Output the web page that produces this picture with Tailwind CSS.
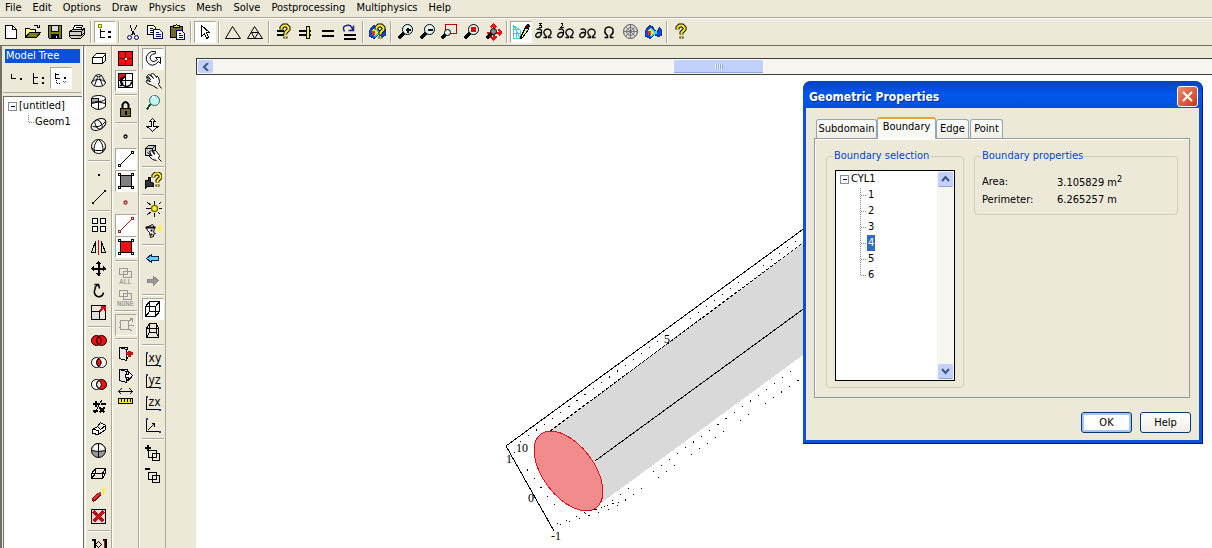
<!DOCTYPE html>
<html lang="en">
<head>
  <meta charset="UTF-8" />
  <meta name="viewport" content="width=device-width, initial-scale=1.0" />
  <title>Geometric Properties</title>
  <script src="https://cdn.jsdelivr.net/npm/@tailwindcss/browser@4"></script>
</head>
<body class="h-screen overflow-hidden flex flex-col bg-[#ece9d8] text-black text-[11px] leading-4 font-['DejaVu_Sans_Condensed','DejaVu_Sans',sans-serif]">

  <!-- menu -->
  <nav class="flex h-[17px] items-center gap-[11px] pl-[5px] pb-[2px]">
    <button>File</button>
    <button>Edit</button>
    <button>Options</button>
    <button>Draw</button>
    <button>Physics</button>
    <button>Mesh</button>
    <button>Solve</button>
    <button>Postprocessing</button>
    <button>Multiphysics</button>
    <button>Help</button>
  </nav>

  <!-- main toolbar -->
  <div id="main-bar" role="toolbar" aria-label="Main" class="flex h-[29px] items-center border-t border-[#aca899] shadow-[inset_0_1px_0_#fff] border-b border-b-[#716f64]"></div>

  <div class="flex flex-1 min-h-0">
    <!-- model tree -->
    <aside class="w-[83px] shrink-0 flex flex-col border-l-2 border-[#716f64] border-r border-r-white pt-[3px] pl-px">
      <h2 class="bg-[#0a50d8] text-white h-[14px] leading-[14px] ml-[2px] mr-[2px] pl-px">Model Tree</h2>
      <div id="tree-bar" role="toolbar" aria-label="Tree detail" class="flex h-[29px] items-center pl-[3px]"></div>
      <hr class="border-[#aca899] mr-px" />
      <div class="flex-1 bg-white border-t border-l border-[#716f64] mt-[3px] pl-1 pt-px">
        <div class="flex items-center gap-[2px] h-4">
          <svg width="9" height="9" viewBox="-.5 -.5 9 9" fill="#fff" stroke="#7b8fa8" shape-rendering="crispEdges"><path d="M0 0H8V8H0z"/><path d="M2 4H6" stroke="#000"/></svg>
          <span>[untitled]</span>
        </div>
        <div class="flex items-center h-4 pl-5 gap-px">
          <svg width="6" height="16" viewBox="-.5 -.5 6 16" fill="none" stroke="#888" stroke-dasharray="1 1" shape-rendering="crispEdges"><path d="M0 0V8H6"/></svg>
          <span>Geom1</span>
        </div>
      </div>
    </aside>

    <!-- side toolbars -->
    <div class="flex shrink-0 pl-px border-l border-[#716f64]">
      <div id="draw-bar" role="toolbar" aria-label="Draw" class="flex flex-col items-center w-[27px] border-l border-l-white border-r border-r-[#aca899] pt-[2px]"></div>
      <div id="select-bar" role="toolbar" aria-label="Selection" class="flex flex-col items-center w-[27px] border-l border-l-white border-r border-r-[#aca899] pt-[2px]"></div>
      <div id="camera-bar" role="toolbar" aria-label="Camera" class="flex flex-col items-center w-[27px] border-l border-l-white border-r border-r-[#aca899] pt-[2px]"></div>
    </div>

    <!-- drawing area -->
    <main class="flex-1 min-w-0 flex flex-col pl-[30px] pt-3">
      <div class="h-[17px] shrink-0 flex border border-r-0 border-[#3c3c3c] bg-[#f6f5f0]">
        <button aria-label="Scroll left" class="w-[15px] m-px rounded-xs bg-[#c1d1fb] grid place-items-center"><svg width="8" height="8" viewBox="0 0 8 8" fill="none" stroke="#3c5584" stroke-width="2"><path d="M6 0L2 4L6 8"/></svg></button>
        <div class="flex-1 flex">
          <div class="w-[46%]"></div>
          <button aria-label="Scroll position" class="w-[91px] h-[14px] rounded-xs border border-white border-b-[#8ba4dc] bg-[#c1d1fb] grid place-items-center"><svg width="8" height="6" viewBox="-.5 -.5 8 6" stroke="#eef3ff" shape-rendering="crispEdges"><path d="M0 0V6M2 0V6M4 0V6M6 0V6"/><path d="M1 0V6M3 0V6M5 0V6M7 0V6" stroke="#90a8e0"/></svg></button>
        </div>
      </div>
      <div class="flex-1 min-h-0 bg-white overflow-hidden">
        <svg width="1016" height="473" viewBox="196 75 1016 473" fill="none" stroke="#000" shape-rendering="crispEdges" aria-label="Cylinder plot">
          <path d="M550 431L803 243L850 208V320L803 355L597 506z" fill="#d9d9d9" stroke="none"/>
          <path d="M550 431L850 208" stroke-dasharray="3 2"/>
          <path d="M595 461L850 275"/>
          <ellipse cx="568.5" cy="471" rx="46" ry="25.5" transform="rotate(53 568.5 471)" fill="#f28b8b" stroke="#e01020"/>
          <path d="M554 531L506 446L850 195"/>
          <path d="M520 442L850 202" stroke-dasharray="1 9"/>
          <path d="M514 452L559 511" stroke-dasharray="1 10"/>
          <path d="M557 524L605 506L803 363" stroke-dasharray="1 9"/>
          <path d="M560 525L614 508L803 377" stroke-dasharray="1 9"/>
          <path d="M584 513L622 501" stroke-dasharray="1 5"/>
          <g fill="#000" stroke="none" class="text-[12px] font-['Liberation_Serif',serif]">
            <text x="516" y="452">10</text>
            <text x="506" y="463">1</text>
            <text x="528" y="502">0</text>
            <text x="551" y="540">-1</text>
            <text x="664" y="343">5</text>
          </g>
        </svg>
      </div>
    </main>
  </div>

  <!-- dialog -->
  <section role="dialog" aria-labelledby="dlg-title" class="absolute left-[803px] top-[81px] w-[400px] rounded-t-lg bg-[#0a50d8] border-r border-b border-[#00138c] px-[3px] pb-[3px]">
    <header class="flex items-center justify-between h-[27px] -mx-[3px] pl-[6px] pr-1 rounded-t-lg bg-linear-to-b from-[#0a3fc4] via-[#0058ee] to-[#0550dd]">
      <h1 id="dlg-title" class="text-white font-bold text-[12px] pt-[5px] [text-shadow:1px_1px_0_#0a2a80]">Geometric Properties</h1>
      <button aria-label="Close" class="mt-1 size-[21px] rounded-[3px] border border-white bg-linear-to-br from-[#f08868] to-[#c8351a] grid place-items-center"><svg width="13" height="13" viewBox="0 0 13 13" stroke="#fff" stroke-width="2"><path d="M2 2L11 11M11 2L2 11"/></svg></button>
    </header>
    <div class="bg-[#ece9d8] px-2 pt-[9px] pb-[7px]">
      <div role="tablist" class="flex items-end h-[21px] pl-[2px]">
        <button role="tab" class="h-[19px] w-[61px] border border-b-0 border-[#91a7b4] rounded-t-[3px] bg-linear-to-b from-white to-[#f0efe6]">Subdomain</button>
        <button role="tab" aria-selected="true" class="h-[22px] w-[59px] -mb-px pb-1 border border-b-0 border-[#91a7b4] border-t-2 border-t-[#f0a030] rounded-t-[3px] bg-[#fbfaf7] relative">Boundary</button>
        <button role="tab" class="h-[19px] w-[33px] border border-b-0 border-[#91a7b4] rounded-t-[3px] bg-linear-to-b from-white to-[#f0efe6]">Edge</button>
        <button role="tab" class="h-[19px] w-[33px] ml-px border border-b-0 border-[#91a7b4] rounded-t-[3px] bg-linear-to-b from-white to-[#f0efe6]">Point</button>
      </div>
      <div class="flex items-start gap-[10px] h-[260px] border border-[#919b9c] mr-px px-[11px] pt-[9px] shadow-[inset_1px_1px_0_#fff]">
        <fieldset class="w-[138px] h-[240px] rounded-[4px] border border-[#d0cdb8] px-2">
          <legend class="text-[#0046d5] px-px ml-[-2px]">Boundary selection</legend>
          <div class="flex h-[211px] border border-black bg-white mt-[6px]">
            <ul role="tree" class="flex-1 pl-1">
              <li role="treeitem">
                <div class="flex items-center gap-[2px] h-4">
                  <svg width="9" height="9" viewBox="-.5 -.5 9 9" fill="#fff" stroke="#7b8fa8" shape-rendering="crispEdges"><path d="M0 0H8V8H0z"/><path d="M2 4H6" stroke="#000"/></svg>
                  <span>CYL1</span>
                </div>
                <ul id="boundaries" role="group" class="pl-5"></ul>
              </li>
            </ul>
            <div class="w-[17px] flex flex-col justify-between bg-[#f6f5f0] p-px">
              <button aria-label="Scroll up" class="h-[15px] rounded-xs bg-[#c1d1fb] border-b border-[#8ba4dc] grid place-items-center"><svg width="9" height="8" viewBox="0 0 9 8" fill="none" stroke="#3c5584" stroke-width="2"><path d="M1 6L4.500 2L8 6"/></svg></button>
              <button aria-label="Scroll down" class="h-[15px] rounded-xs bg-[#c1d1fb] border-b border-[#8ba4dc] grid place-items-center"><svg width="9" height="8" viewBox="0 0 9 8" fill="none" stroke="#3c5584" stroke-width="2"><path d="M1 2L4.500 6L8 2"/></svg></button>
            </div>
          </div>
        </fieldset>
        <fieldset class="flex-1 h-[67px] rounded-[4px] border border-[#d0cdb8] px-[7px]">
          <legend class="text-[#0046d5] px-px ml-[-1px]">Boundary properties</legend>
          <dl class="grid grid-cols-[75px_1fr] leading-[18px] pt-[9px]">
            <dt>Area:</dt><dd class="pt-px h-[18px]">3.105829 m<sup class="text-[9px]">2</sup></dd>
            <dt>Perimeter:</dt><dd>6.265257 m</dd>
          </dl>
        </fieldset>
      </div>
      <div class="flex justify-end gap-2 pt-[14px]">
        <button class="w-[51px] h-[21px] rounded-[3px] border border-[#003c74] bg-white shadow-[inset_0_0_0_2px_#a6c4f5]">OK</button>
        <button class="w-[51px] h-[21px] rounded-[3px] border border-[#003c74] bg-linear-to-b from-white to-[#eeede5]">Help</button>
      </div>
    </div>
  </section>

  <script>
    // 18px icons, whole numbers are pixel centres
    const smooth = (s) => `<g shape-rendering="auto">${s}</g>`;
    const lens = (x) => `<path d="M7 10L2 15" stroke-width="3"/>` + smooth('<circle cx="11" cy="6" r="5" fill="#dff6f4"/>') + x;
    const omega = smooth('<path d="M9 14H12V13Q8 10 10 7Q13 4 16 7Q18 10 14 13V14H17" stroke-width="1.300"/>');
    const partial = smooth('<path d="M2 6Q8 4 7 10Q6 14 3 14Q0 13 2 10Q5 8 7 10" stroke-width="1.300"/>');
    const axes = (t) => `<path d="M2 1V15H16"/><path d="M1 2H3M15 14V16" stroke="#2040a0" stroke-width="2"/>${t}`;
    const label = (t) => `<text x="4" y="11" font-size="12" fill="#000" stroke="none">${t}</text>`;
    const venn = (a, b, c) => smooth(`<circle cx="6" cy="8" r="5" fill="${a}"/><circle cx="11" cy="8" r="5" fill="${b}"/><path d="M8.500 4Q4 8 8.500 12Q13 8 8.500 4" fill="${c}"/>`);
    const node = (f) => `<path d="M3 3H14V14H3z" fill="${f}"/><path d="M1 1H3V3H1zM14 1H16V3H14zM1 14H3V16H1zM14 14H16V16H14z" fill="#fff"/>`;
    const seg = (c) => `<path d="M3 14L14 3" stroke="${c}"/><path d="M1 14H3V16H1zM14 1H16V3H14z" fill="#fff" stroke="${c}"/>`;
    const dot = (c) => smooth(`<circle cx="8" cy="8" r="1.500" fill="#fff" stroke="${c}" stroke-width="1.300"/>`);
    const mark = (x, y) => `M${x} ${y + 4}V${y + 2}L${x + 2} ${y}H${x + 5}L${x + 7} ${y + 2}V${y + 4}L${x + 4} ${y + 7}V${y + 9}M${x + 4} ${y + 11}V${y + 13}`;
    const qmark = (x, y) => smooth(`<path d="${mark(x, y)}" stroke-width="4"/><path d="${mark(x, y)}" stroke="#ffee20" stroke-width="2"/>`);
    const blob = '<path d="M1 7L5 2L9 4L10 7L13 8L15 4L17 6V12L14 13L10 11L6 15L1 13z" fill="#1848d0" stroke="#1038a0"/><path d="M3 7L6 4L9 7L12 8V10L7 13L3 11z" fill="#30d8e8" stroke="none"/><path d="M3 7L6 5L9 9L6 12L3 11z" fill="#ffe830" stroke="none"/><path d="M3 7L6 8V11L3 11z" fill="#e83010" stroke="none"/>';
    const door = '<path d="M2 3L9 5V16L2 14z" fill="#e8e8e8"/><path d="M2 3H10V5M10 12V14H9"/>';
    const boxes = '<path d="M2 2H10V8H2zM6 5H14V11H6z" stroke="#999"/>';
    const small = (t) => `<text x="8" y="17" text-anchor="middle" font-size="7" font-family="DejaVu Sans Mono" fill="#888" stroke="none">${t}</text>`;

    const icons = {
      New: '<path d="M3 2H10L14 6V15H3z" fill="#fff"/><path d="M10 2V6H14"/>',
      Open: '<path d="M1 14V5H5L6 6H11V9" fill="#ffff80"/><path d="M1 14L5 9H16L12 14z" fill="#808000"/><path d="M9 3Q12 0 14 4M12 4H15V1"/>',
      Save: '<path d="M2 2H15V15H3L2 14z" fill="#808000"/><path d="M5 2H12V8H5z" fill="#ddd"/><path d="M5 11H12V15H5z" fill="#000"/><path d="M10 12V14" stroke="#fff"/>',
      Print: '<path d="M4 7L6 2H14L12 7" fill="#fff"/><path d="M7 4H12M6 6H11"/><path d="M1 8L4 6H13L16 5V11L12 15H3L1 13z" fill="#d0d0c8"/><path d="M1 8H13L16 5M1 12H13V8M13 12L16 9"/><path d="M9 13H12" stroke="#d0c000"/>',
      'Model tree': '<path d="M2 1H5V4H2z" fill="#ffff30" stroke="#908800"/><path d="M4 5V14H8M4 8H8" stroke-width="1"/><path d="M12 8H14V9H12zM12 13H14V14H12z" fill="#000"/>',
      Cut: '<path d="M6 2L7 7L11 12M12 2L10 7L7 12"/>' + smooth('<circle cx="5" cy="14" r="2" stroke="#0000a0"/><circle cx="12" cy="14" r="2" stroke="#0000a0"/>'),
      Copy: '<path d="M1 2H7L9 4V11H1z" fill="#fff"/><path d="M3 5H6M3 7H7M3 9H7"/><path d="M7 6H13L16 9V15H7z" fill="#fff" stroke="#000080"/><path d="M9 9H12M9 11H14M9 13H14" stroke="#000080"/>',
      Paste: '<path d="M2 3H14V14H2z" fill="#706830"/><path d="M5 4V2H7L8 1L9 2H11V4z" fill="#e8e060"/><path d="M8 7H13L16 10V16H8z" fill="#fff" stroke="#000080"/><path d="M10 10H12M10 12H14M10 14H14" stroke="#000080"/>',
      Select: '<path d="M5 2V13L8 10L10 15L12 14L10 9H13z" fill="#fff"/>',
      'Initialize mesh': smooth('<path d="M8 3L16 15H1z"/>'),
      'Refine mesh': smooth('<path d="M8 3L16 15H1zM5 9H12L8 15z"/>'),
      'Solver parameters': '<path d="M2 7H9M2 11H9" stroke-width="2"/>' + qmark(7, 2),
      'Solver manager': '<path d="M2 7H14M2 11H14" stroke-width="2"/><path d="M11 2V15" stroke-width="4"/><path d="M11 3V14" stroke="#ffee20" stroke-width="2"/>',
      Solve: '<path d="M3 7H15M3 12H15" stroke-width="2"/>',
      Restart: '<path d="M3 11H15M3 15H15" stroke-width="2"/>' + smooth('<path d="M4 8Q1 3 6 2Q12 1 12 7M8 7H13V2" stroke="#202080" stroke-width="1.500"/>'),
      'Plot parameters': blob + qmark(8, 2),
      'Zoom in': lens('<path d="M9 6H14M11 4V9" stroke-width="2"/>'),
      'Zoom out': lens('<path d="M9 6H14" stroke-width="2"/>'),
      'Zoom window': '<path d="M5 1H16V10H5z" stroke="#c00000"/><path d="M5 11L1 15" stroke-width="3"/>' + smooth('<circle cx="7" cy="9" r="3" fill="#dff6f4"/>'),
      'Zoom selection': lens('<path d="M9 4H13V8H9z" fill="#e00000" stroke="#e00000"/>'),
      'Zoom extents': '<path d="M9 1V16M2 9H17" stroke="#e81010" stroke-width="2"/><path d="M6 4L9 1L12 4M6 13L9 16L12 13M14 6L17 9L14 12" stroke="#e81010" stroke-width="2"/><path d="M7 10L2 15" stroke-width="3"/>' + smooth('<circle cx="9" cy="8" r="3" fill="#888"/>'),
      'Draw mode': '<path d="M1 2L8 15V7zM1 2V15H8M1 6H5M1 10H7M4 15V7" stroke="#40c8d8"/><path d="M8 14L13 4L16 6L10 14L8 15z" fill="#ffff50"/><path d="M13 3L16 5L17 2L15 1z" fill="#701010"/>',
      'Point mode': partial + omega + '<path d="M4 0H7L5 2H7V4H4"/>',
      'Edge mode': partial + omega + '<path d="M4 0H6V2L4 4H7"/>',
      'Boundary mode': partial + omega,
      'Subdomain mode': smooth('<path d="M4 14H7V12Q3 9 5 5Q8 2 12 5Q14 9 10 12V14H13" stroke-width="1.500"/>'),
      'Mesh mode': smooth('<g stroke="#555"><circle cx="8" cy="8" r="7" fill="#ddd"/><path d="M8 1V15M1 8H15M3 3L13 13M13 3L3 13" stroke="#777"/><circle cx="8" cy="8" r="4" stroke="#777"/></g>'),
      'Postprocessing mode': blob,
      Help: qmark(5, 2),

      'One level': '<path d="M3 4V9H7" stroke-width="1"/><path d="M12 9H13V10H12z" fill="#000"/>',
      'Two levels': '<path d="M3 3V14H7M3 8H7"/><path d="M12 8H13V9H12zM12 13H13V14H12z" fill="#000"/>',
      'All levels': '<path d="M3 3V9H7M3 5H6"/><path d="M12 8H13V9H12z" fill="#000"/><path d="M4 10V14H8" stroke-dasharray="1 1"/><path d="M11 12L13 14M13 12L11 14" stroke="#666"/>',

      Block: '<path d="M2 7L6 3H15V10L12 13H2z" fill="#fff"/><path d="M2 7H12L15 4M12 7V13"/>',
      Cone: smooth('<path d="M5 3L1 10Q2 14 8 14Q14 14 15 10L11 3Q8 1 5 3" fill="#fff"/><path d="M5 3Q8 6 11 3M1 10Q3 7 8 7Q13 7 15 10M7 5L4 13M9 5L12 13"/>'),
      Cylinder: smooth('<path d="M1 4V12Q8 18 15 12V4" fill="#fff"/><ellipse cx="8" cy="4" rx="7" ry="3" fill="#fff"/><path d="M8 4V15M1 9Q8 6 15 9"/><path d="M1 4V8L8 7V4z" fill="#aaa"/>'),
      Ellipsoid: smooth('<ellipse cx="8" cy="8" rx="8" ry="5" transform="rotate(-30 8 8)" fill="#fff"/><ellipse cx="8" cy="8" rx="3" ry="5" transform="rotate(-30 8 8)"/><path d="M2 10Q9 12 15 5"/>'),
      Sphere: smooth('<circle cx="8" cy="8" r="7" fill="#fff"/><path d="M8 1Q2 6 4 14M8 1Q14 6 12 14M1 9Q3 12 5 12H11Q14 12 15 9"/>'),
      Point: '<path d="M8 8H9V9H8z" fill="#000"/>',
      Line: '<path d="M3 14L14 3"/><path d="M2 14H3V15H2zM14 2H15V3H14z" fill="#000"/>',
      Array: '<path d="M2 2H7V7H2zM10 2H15V7H10zM2 10H7V15H2zM10 10H15V15H10z" fill="#fff"/>',
      Mirror: '<path d="M1 14L5 3V14zM11 14V3L15 14z"/><path d="M8 1V16" stroke="#d01010"/>',
      Move: '<path d="M8 2V15M2 8H15" stroke-width="2"/><path d="M6 3L8 1L10 3zM6 13L8 15L10 13zM3 6L1 8L3 10zM13 6L15 8L13 10z" fill="#000"/>',
      Rotate: smooth('<path d="M5 5Q2 12 7 14Q12 15 13 10M4 5L8 2M4 2L8 2L9 6" stroke-width="1.500"/>'),
      Scale: '<path d="M1 1H15V15H1z"/><path d="M1 7H9V15H1z" fill="#ddd"/><path d="M9 7L14 2M10 2H14V6" stroke="#d01010" stroke-width="2"/>',
      Union: venn('#f01010', '#f01010', '#f01010'),
      Intersection: venn('#fff', '#fff', '#f01010'),
      Difference: venn('#fff', '#f01010', '#fff'),
      'Create composite': '<path d="M2 5H8M5 2V8M10 5H15M2 12H7M9 9L14 14M14 9L9 14" stroke-width="2"/><path d="M11 2L4 15"/>',
      Extrude: '<path d="M2 9L7 6L10 2L15 5V9L8 14L2 13zM7 6L10 9L15 5M2 9L8 10V14" fill="#fff"/>',
      Revolve: smooth('<circle cx="8" cy="8" r="7" fill="#999"/><path d="M1 8A7 7 0 0 1 15 8L8 9z" fill="#fff"/><path d="M8 1V15"/>'),
      Embed: '<path d="M1 9L5 4H15L12 9zM1 9V14H12V9M12 14L15 9V4M5 4V9L1 14M5 9H15"/>',
      Edit3d: '<path d="M2 14L10 7" stroke="#801010" stroke-width="4"/><path d="M3 13L10 6" stroke="#e03030" stroke-width="2"/><path d="M11 3L15 7M15 2L11 6M13 1V8" stroke="#ffee30"/>',
      Delete: '<path d="M1 1H15V15H1z" fill="#ddd"/><path d="M3 3L13 13M13 3L3 13" stroke="#c01010" stroke-width="3"/>',
      Align: '<path d="M1 3H4V13H1M15 2V14M12 3H15M12 13H15" stroke-width="2"/><path d="M5 8L8 5L11 8L8 11z"/><path d="M14 3V13" stroke="#c01010"/>',

      'Select domains': '<path d="M1 1H15V15H1z" fill="#f01010"/><path d="M8 1V15M1 8H15" stroke="#700"/><path d="M7 8H9M8 7V9" stroke="#fff" stroke-width="2"/>',
      'Select adjacent': '<path d="M1 1H15V15H1z" fill="#fff"/><path d="M1 1H8V4L4 8H1z" fill="#f01010"/><path d="M8 1V15M1 8H15"/>' + smooth('<path d="M8 4A5 5 0 1 0 14 9M4 5Q2 9 5 13M5 13H2M5 13V10" stroke-width="1.500"/>'),
      Lock: smooth('<path d="M5 8V4Q8 -1 11 4V8" stroke-width="2"/>') + '<path d="M3 8H13V16H3z" fill="#706830"/><path d="M8 10V14" stroke-width="2"/>',
      'Show points': dot('#000'),
      'Show edges': seg('#000'),
      'Show faces': node('#808080'),
      'Red points': dot('#a02020'),
      'Red edges': seg('#a02020'),
      'Red faces': node('#f01010'),
      'Select all': boxes + small('ALL'),
      'Select none': boxes + small('NONE'),
      'Object properties': '<path d="M3 4H11V13H3zM1 6H3M1 11H3M11 5L15 2M12 2H15V5M11 12L15 15M11 9H16" stroke="#999"/>',
      'Delete interior': door + '<path d="M8 9H15M12 6V12" stroke="#c01818" stroke-width="3"/>',
      Export: door + '<path d="M8 8H11V5L15 9L11 14V11H8z" fill="#fff"/>',
      Measure: '<path d="M1 3H15M4 0L1 3L4 6M12 0L15 3L12 6"/><path d="M1 10H15V15H1z" fill="#ffee20"/><path d="M4 10V13M7 10V13M10 10V13M13 10V13"/>',

      Orbit: smooth('<path d="M7 1H11V3Q4 4 6 9Q8 13 13 9L11 7H16V13L14 11Q8 18 3 12Q-1 5 7 1z" fill="#fff"/>'),
      Pan: smooth('<path d="M2 4L6 7L3 3Q4 1 6 3L9 6L6 2Q8 0 10 2L12 5Q12 2 14 5L15 9L14 12L17 16M2 4Q1 6 6 9L2 8Q1 9 3 11L8 13L13 16" fill="#fff"/>'),
      Zoom: '<path d="M6 10L2 15" stroke="#105030" stroke-width="2"/>' + smooth('<circle cx="10" cy="6" r="5" fill="#bff4f4" stroke="#206060"/><path d="M8 3L10 2M12 9L13 8" stroke="#fff" stroke-width="2"/>'),
      Dolly: '<path d="M8 2L11 5H9V10H14L11 12L8 15L5 12L2 10H7V5H5z" fill="#fff"/>',
      'Move camera': '<path d="M1 4L4 1H11V8L8 11H1zM1 4H8V11M8 4L11 1" fill="#ccc"/>' + smooth('<path d="M3 8L7 11L5 7L7 6L10 10L9 6H11L15 11L14 14L17 17M4 11L8 15L12 16" fill="#fff"/>'),
      'Camera settings': '<path d="M1 8H4V5H6V9L9 11V14H3L1 16z" fill="#333"/>' + qmark(9, 1),
      Light: '<path d="M10 0V4M10 12V16M1 8H6M14 8H17M3 2L7 5M14 12L16 14M16 2L14 4M3 14L7 11"/>' + smooth('<circle cx="10" cy="8" r="3" fill="#ffff30" stroke="#807800" stroke-width="1.500"/>'),
      Headlight: smooth('<path d="M2 5L8 2L10 5L9 10L11 11L9 12V14L6 15L5 10L3 8z" fill="#fff"/><path d="M1 5H11M6 8H8M6 12H8" stroke-width="2"/><path d="M15 3V9" stroke="#fff050" stroke-width="4"/>'),
      Back: '<path d="M2 8L7 4V6H14V10H7V12z" fill="#60d8f8" stroke="#102060"/>',
      Forward: '<path d="M14 8L9 4V7H3V10H9V13z" fill="#999" stroke="#888"/>',
      Orthographic: '<path d="M1 6H11V16H1zM5 1H15V11H5zM1 6L5 1M11 6L15 1M11 16L15 11M1 16L5 11"/>',
      Perspective: '<path d="M2 6H14V15H2zM5 1H12V10H5zM2 6L5 1M14 6L12 1M5 10L2 15M12 10L14 15"/>',
      'XY view': axes(label('xy')),
      'YZ view': axes(label('yz')),
      'ZX view': axes(label('zx')),
      '3D view': axes('<path d="M3 14L10 7M7 7H10V10"/>'),
      'Add view': '<path d="M0 3H6M3 0V6" stroke-width="2"/><path d="M4 6H12V13H4zM8 9H15V16H8z"/>',
      'Remove view': '<path d="M0 2H5" stroke-width="2"/><path d="M4 6H12V13H4zM8 9H15V16H8z"/>',
    };

    // "-" is a separator, "*" a pressed button, "!" a pressed button that is disabled
    const bars = {
      'main-bar': ['New', 'Open', 'Save', 'Print', '-', '*Model tree', '-', 'Cut', 'Copy', 'Paste', '-', '*Select', '-', 'Initialize mesh', 'Refine mesh', '-', 'Solver parameters', 'Solver manager', 'Solve', 'Restart', '-', 'Plot parameters', '-', 'Zoom in', 'Zoom out', 'Zoom window', 'Zoom selection', 'Zoom extents', '-', '*Draw mode', 'Point mode', 'Edge mode', 'Boundary mode', 'Subdomain mode', 'Mesh mode', 'Postprocessing mode', '-', 'Help'],
      'tree-bar': ['One level', 'Two levels', '*All levels'],
      'draw-bar': ['Block', 'Cone', 'Cylinder', 'Ellipsoid', 'Sphere', '-', 'Point', 'Line', '-', 'Array', 'Mirror', 'Move', 'Rotate', 'Scale', '-', 'Union', 'Intersection', 'Difference', 'Create composite', 'Extrude', 'Revolve', 'Embed', 'Edit3d', 'Delete', '-', 'Align'],
      'select-bar': ['Select domains', '*Select adjacent', '-', 'Lock', '-', 'Show points', '*Show edges', '*Show faces', 'Red points', '*Red edges', '*Red faces', '-', 'Select all', 'Select none', '-', '!Object properties', '-', 'Delete interior', 'Export', 'Measure'],
      'camera-bar': ['*Orbit', 'Pan', 'Zoom', 'Dolly', '-', 'Move camera', '-', 'Camera settings', '-', 'Light', 'Headlight', '-', 'Back', 'Forward', '-', '*Orthographic', 'Perspective', '-', 'XY view', 'YZ view', 'ZX view', '3D view', '-', 'Add view', 'Remove view'],
    };

    for (const [id, items] of Object.entries(bars)) {
      const flat = id === 'main-bar' || id === 'tree-bar';
      document.getElementById(id).innerHTML = items.map((item) => {
        if (item === '-') {
          return flat
            ? '<div class="w-[2px] h-[22px] mx-[2px] shrink-0 border-l border-[#aca899] bg-white"></div>'
            : '<div class="h-[2px] w-[22px] my-[2px] shrink-0 border-t border-[#aca899] bg-white"></div>';
        }
        const name = item.replace(/^[*!]/, '');
        const look = item[0] === '*'
          ? 'size-[22px] shrink-0 grid place-items-center bg-white border border-[#aca899] border-r-white border-b-white'
          : item[0] === '!'
            ? 'size-[22px] shrink-0 grid place-items-center border border-[#aca899] border-r-white border-b-white'
            : 'size-[22px] shrink-0 grid place-items-center';
        return `<button class="${look}" aria-label="${name}"><svg width="18" height="18" viewBox="-.5 -.5 18 18" fill="none" stroke="#000" shape-rendering="crispEdges">${icons[name]}</svg></button>`;
      }).join('');
    }

    document.getElementById('boundaries').innerHTML = [1, 2, 3, 4, 5, 6].map((n) => `
      <li role="treeitem" class="flex items-center h-4 gap-px">
        <svg width="6" height="16" viewBox="-.5 -.5 6 16" fill="none" stroke="#888" stroke-dasharray="1 1" shape-rendering="crispEdges"><path d="M0 0V${n === 6 ? 8 : 16}M0 8H6"/></svg>
        <span class="${n === 4 ? 'bg-[#316ac5] text-white px-px' : 'px-px'}">${n}</span>
      </li>`).join('');
  </script>
</body>
</html>
